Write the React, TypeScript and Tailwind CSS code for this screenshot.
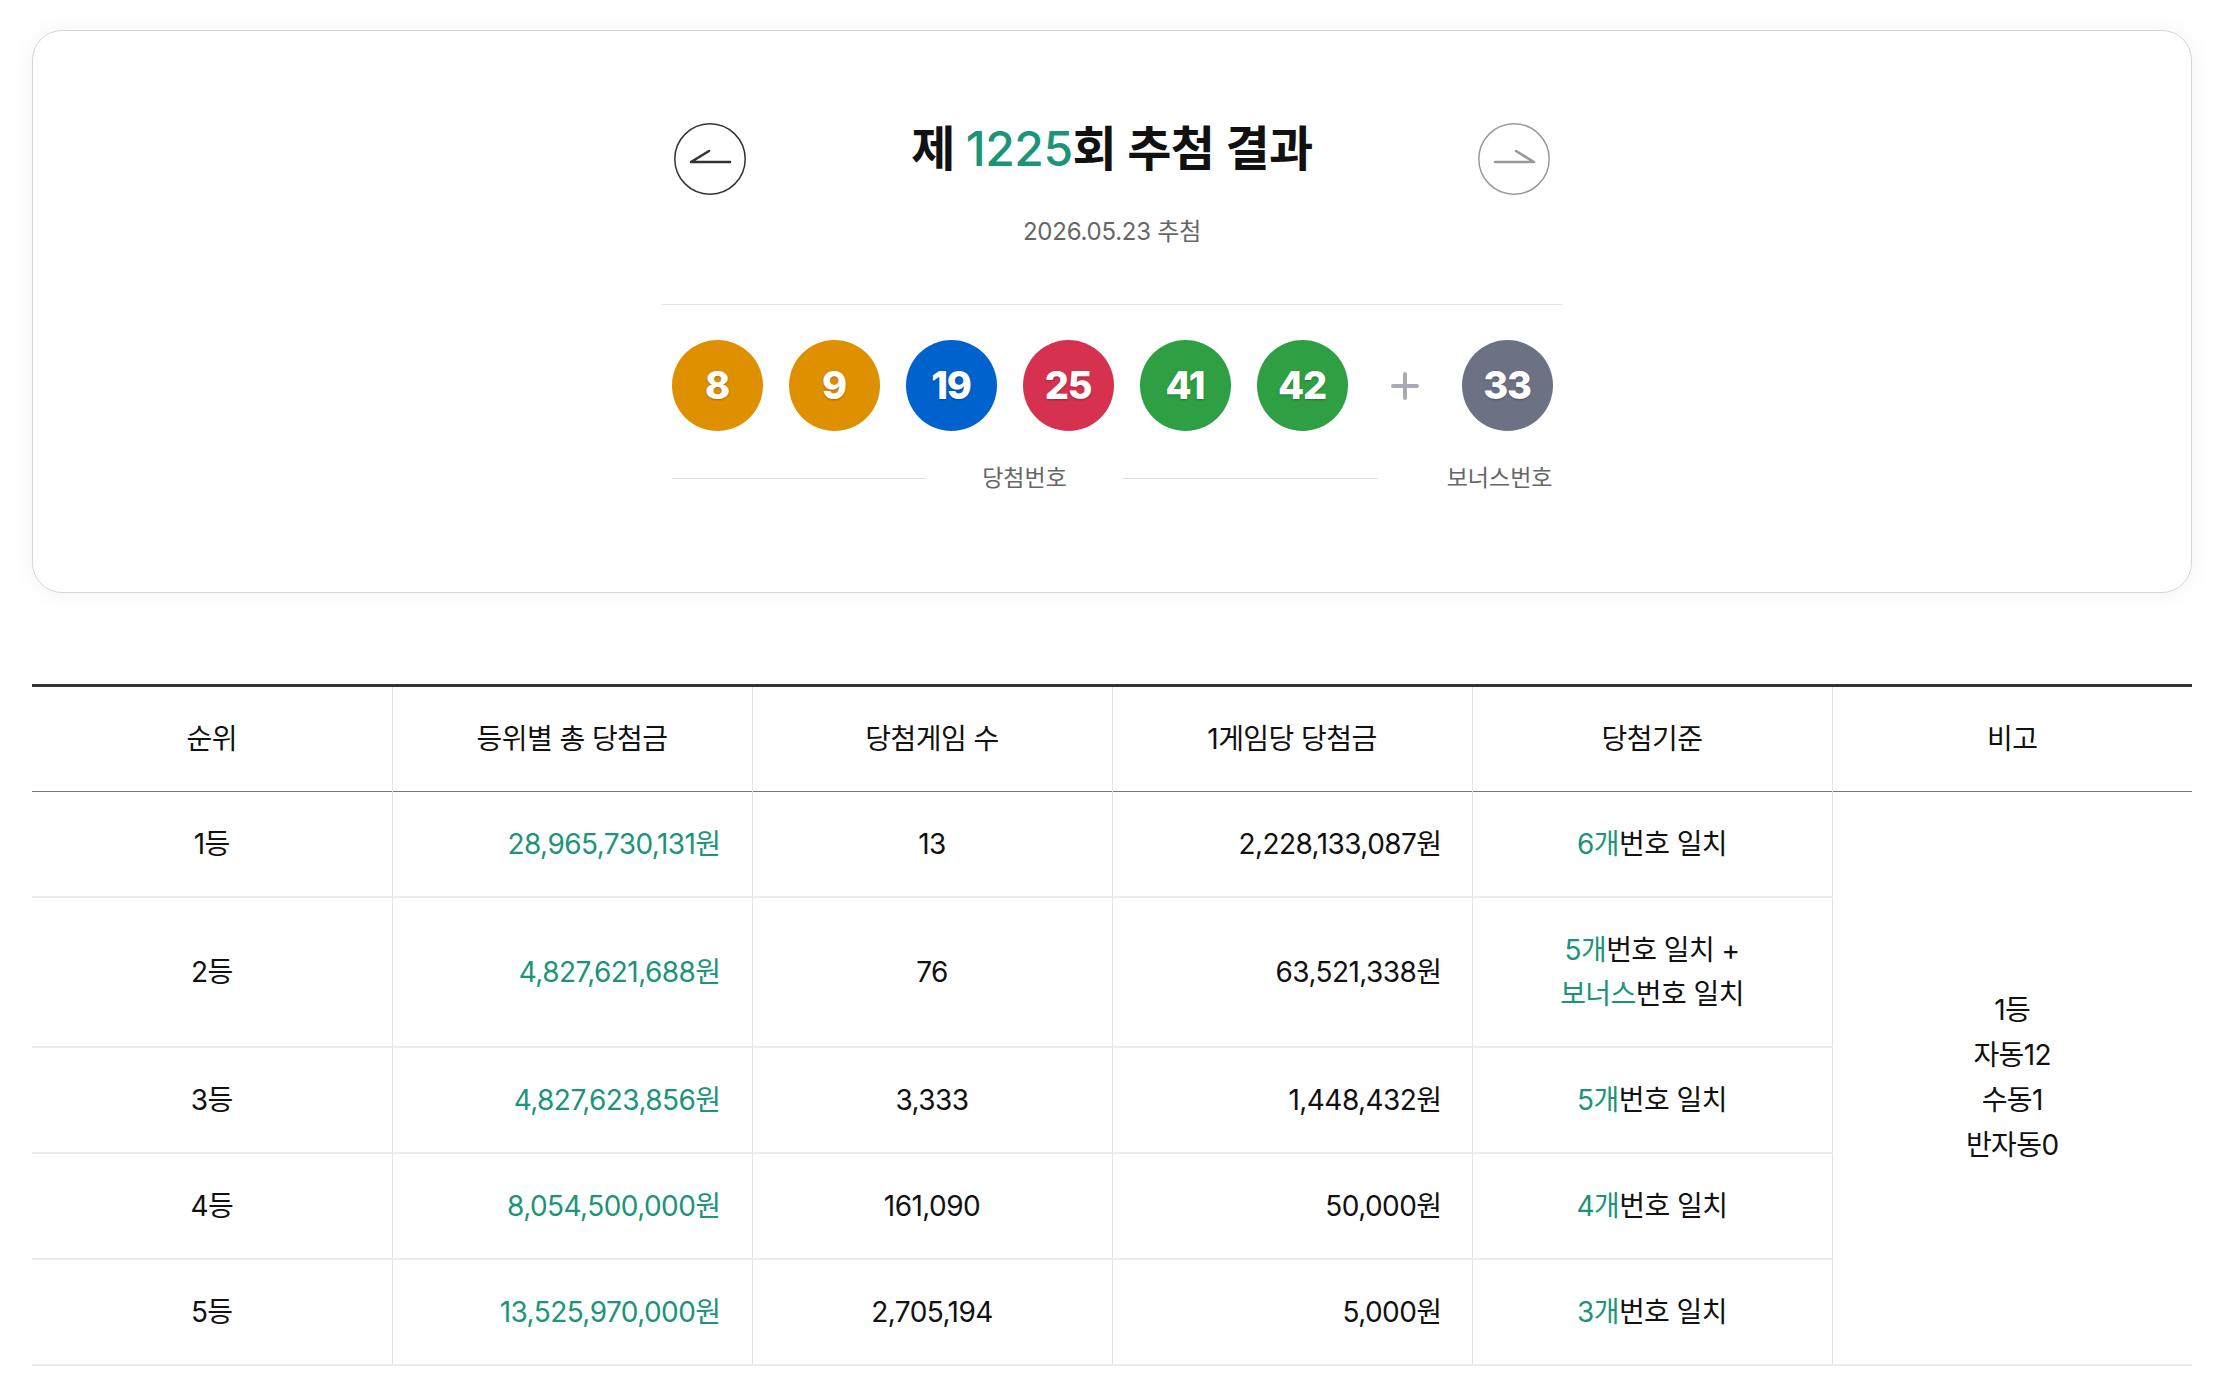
import { Fragment } from "react";

interface Prize {
  rank: string;
  total: string;
  games: string;
  perGame: string;
  rule: React.ReactNode;
}

const GREEN = "text-[#1c9479]";

const balls = [
  { n: 8, bg: "bg-[#de9000]" },
  { n: 9, bg: "bg-[#de9000]" },
  { n: 19, bg: "bg-[#0062cc]" },
  { n: 25, bg: "bg-[#d6314e]" },
  { n: 41, bg: "bg-[#2e9f43]" },
  { n: 42, bg: "bg-[#2e9f43]" },
];

const prizes: Prize[] = [
  {
    rank: "1등",
    total: "28,965,730,131원",
    games: "13",
    perGame: "2,228,133,087원",
    rule: (
      <>
        <span className={GREEN}>6개</span>번호 일치
      </>
    ),
  },
  {
    rank: "2등",
    total: "4,827,621,688원",
    games: "76",
    perGame: "63,521,338원",
    rule: (
      <>
        <span className={GREEN}>5개</span>번호 일치 +
        <br />
        <span className={GREEN}>보너스</span>번호 일치
      </>
    ),
  },
  {
    rank: "3등",
    total: "4,827,623,856원",
    games: "3,333",
    perGame: "1,448,432원",
    rule: (
      <>
        <span className={GREEN}>5개</span>번호 일치
      </>
    ),
  },
  {
    rank: "4등",
    total: "8,054,500,000원",
    games: "161,090",
    perGame: "50,000원",
    rule: (
      <>
        <span className={GREEN}>4개</span>번호 일치
      </>
    ),
  },
  {
    rank: "5등",
    total: "13,525,970,000원",
    games: "2,705,194",
    perGame: "5,000원",
    rule: (
      <>
        <span className={GREEN}>3개</span>번호 일치
      </>
    ),
  },
];

const ArrowButton = ({ dir }: { dir: "prev" | "next" }) => {
  const color = dir === "prev" ? "#333333" : "#9a9a9a";
  return (
    <button className="w-[72px] h-[72px] shrink-0" aria-label={dir === "prev" ? "이전 회차" : "다음 회차"}>
      <svg viewBox="0 0 72 72" width="72" height="72" fill="none">
        <circle cx="36" cy="36" r="35.2" stroke={color} strokeWidth="1.5" />
        {dir === "prev" ? (
          <path d="M17 39H56M17 39L35 28" stroke={color} strokeWidth="2.6" strokeLinecap="round" />
        ) : (
          <path d="M17 39H56M56 39L38 28" stroke={color} strokeWidth="2.6" strokeLinecap="round" />
        )}
      </svg>
    </button>
  );
};

const Ball = ({ n, bg }: { n: number | string; bg: string }) => (
  <div
    className={`w-[91px] h-[91px] rounded-full ${bg} flex items-center justify-center text-white text-[38px] font-extrabold tracking-[-0.03em] [text-shadow:0_1px_2px_rgba(0,0,0,0.25)]`}
  >
    {n}
  </div>
);

export default function App() {
  return (
    <div
      className="min-h-screen bg-white text-[#111] pt-[30px] pl-[32px]"
      style={{ fontFamily: "Inter, 'Noto Sans CJK KR', 'Noto Sans', sans-serif" }}
    >
      {/* Draw result card */}
      <div className="w-[2160px] border border-[#d6d6d6] rounded-[30px] bg-white shadow-[0_0_26px_rgba(0,0,0,0.05)] pt-[92px] pb-[99px]">
        <div className="w-[900px] mx-auto">
          <div className="flex items-start justify-between px-[12px]">
            <ArrowButton dir="prev" />
            <h2 className="text-[48px] leading-[52px] font-bold tracking-[-0.01em] text-[#111]">
              제 <span className={`${GREEN} font-medium`}>1225</span>회 추첨 결과
            </h2>
            <ArrowButton dir="next" />
          </div>
          <p className="mt-[22px] text-center text-[24px] leading-[30px] text-[#666] tracking-[-0.01em]">
            2026.05.23 추첨
          </p>
          <div className="mt-[57px] border-t border-[#e3e3e3]" />

          <div className="mt-[35px] w-[881px] mx-auto flex items-center">
            <div className="flex gap-[26px]">
              {balls.map((b) => (
                <Ball key={b.n} n={b.n} bg={b.bg} />
              ))}
            </div>
            <div className="w-[114px] flex justify-center">
              <svg width="30" height="30" viewBox="0 0 30 30">
                <path d="M15 3V27M3 15H27" stroke="#a8aab5" strokeWidth="4" strokeLinecap="round" />
              </svg>
            </div>
            <Ball n={33} bg="bg-[#6c7283]" />
          </div>

          <div className="mt-[32px] w-[881px] mx-auto flex items-center text-[23px] leading-[30px] text-[#666]">
            <div className="w-[706px] flex items-center">
              <div className="flex-1 border-t border-[#dcdcdc]" />
              <span className="px-[56px]">당첨번호</span>
              <div className="flex-1 border-t border-[#dcdcdc]" />
            </div>
            <span className="ml-auto">보너스번호</span>
          </div>
        </div>
      </div>

      {/* Prize table */}
      <table className="mt-[91px] w-[2160px] table-fixed border-collapse text-[28px] leading-[44px] tracking-[-0.02em]">
        <thead>
          <tr className="border-t-[3px] border-t-[#333] border-b-[1.5px] border-b-[#777]">
            {["순위", "등위별 총 당첨금", "당첨게임 수", "1게임당 당첨금", "당첨기준", "비고"].map((h, i) => (
              <th
                key={h}
                className={`py-[30px] font-normal text-[#111] ${i > 0 ? "border-l border-[#e2e2e2]" : ""}`}
              >
                {h}
              </th>
            ))}
          </tr>
        </thead>
        <tbody>
          {prizes.map((p, i) => (
            <Fragment key={p.rank}>
              <tr className="border-b-2 border-[#ececec]">
                <td className="py-[30px] text-center">{p.rank}</td>
                <td className={`py-[30px] pr-[31px] text-right border-l border-[#e2e2e2] ${GREEN}`}>{p.total}</td>
                <td className="py-[30px] text-center border-l border-[#e2e2e2]">{p.games}</td>
                <td className="py-[30px] pr-[30px] text-right border-l border-[#e2e2e2]">{p.perGame}</td>
                <td className="py-[30px] text-center border-l border-[#e2e2e2]">{p.rule}</td>
                {i === 0 && (
                  <td rowSpan={5} className="text-center align-middle border-l border-[#e2e2e2] leading-[45px]">
                    1등
                    <br />
                    자동12
                    <br />
                    수동1
                    <br />
                    반자동0
                  </td>
                )}
              </tr>
            </Fragment>
          ))}
        </tbody>
      </table>
    </div>
  );
}
